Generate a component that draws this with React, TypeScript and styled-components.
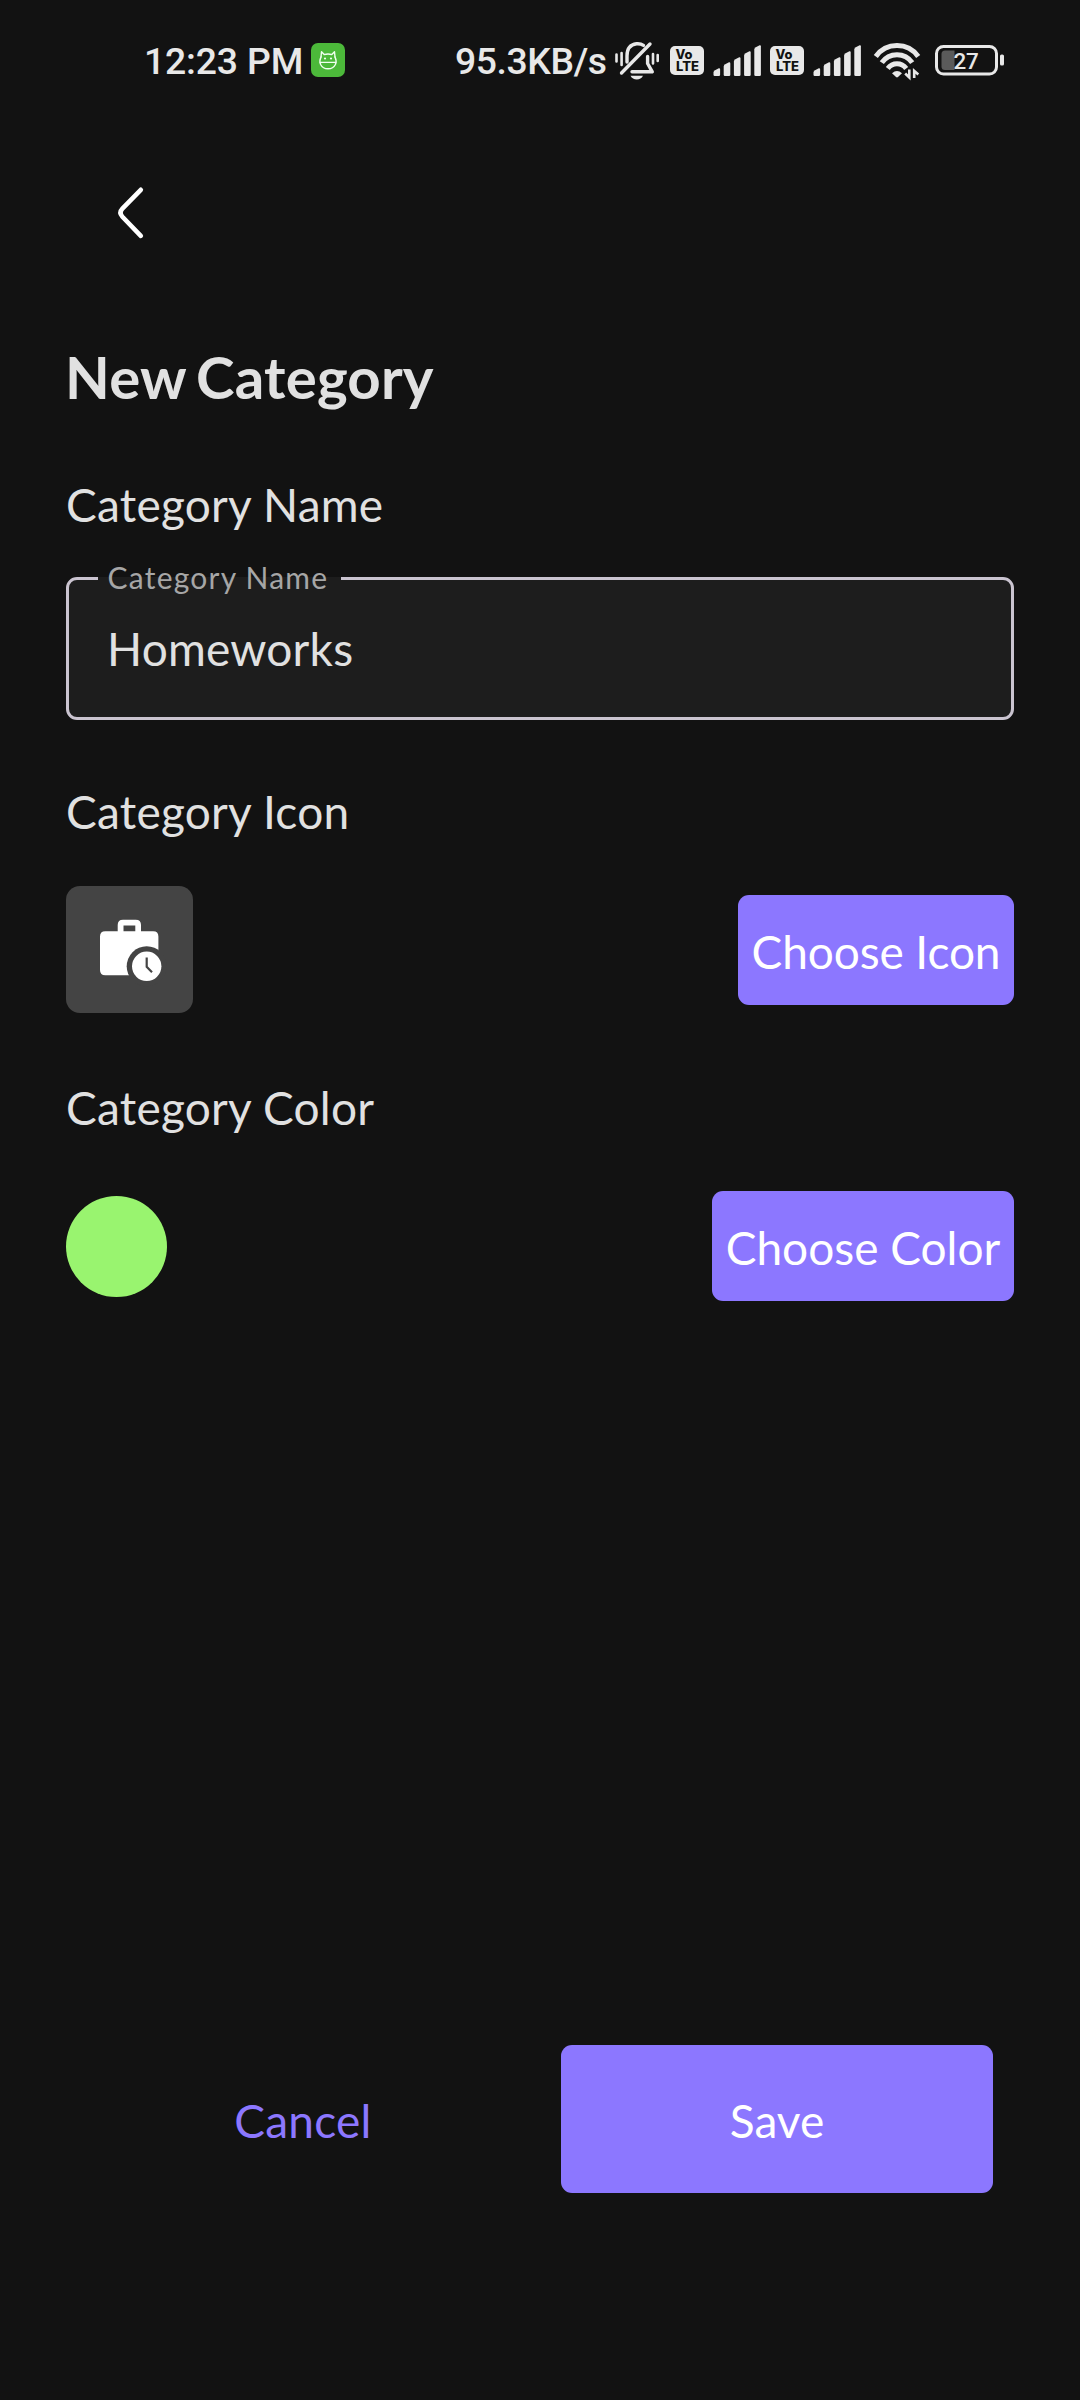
import React from "react";
import styled, { createGlobalStyle } from "styled-components";

const color = {
  bg: "#121212",
  field: "#1d1d1d",
  text: "#e1e1e1",
  muted: "#a6a6a6",
  outline: "#cac4d0",
  primary: "#8c77ff",
  tile: "#444444",
  picked: "#99f46f",
  status: "#e8e8e8",
};

const GlobalStyle = createGlobalStyle`
  * { box-sizing: border-box; }
  body { margin: 0; background: ${color.bg}; }
`;

const Screen = styled.div`
  display: flex;
  flex-direction: column;
  width: 1080px;
  height: 2400px;
  overflow: hidden;
  background: ${color.bg};
  color: ${color.text};
  font-family: Lato, "Open Sans", sans-serif;
`;

const StatusBar = styled.div`
  display: flex;
  align-items: center;
  justify-content: space-between;
  height: 120px;
  padding: 0 75px 0 144px;
  color: ${color.status};
  font: 500 37.3px/48px Roboto, sans-serif;
`;

const StatusGroup = styled.div`
  display: flex;
  align-items: center;
`;

const StatusText = styled.span<{ $width: number; $tracking?: number }>`
  width: ${(p) => p.$width}px;
  padding-top: 2px;
  white-space: nowrap;
  letter-spacing: ${(p) => p.$tracking ?? 0}px;
`;

const StatusIcon = styled.svg`
  display: block;
  flex: none;
  height: 48px;
`;

const BackBar = styled.div`
  display: flex;
  height: 222px;
  padding: 58px 0 0 96px;
`;

const BackButton = styled.button`
  width: 68px;
  height: 68px;
  padding: 0;
  border: 0;
  background: none;
`;

const Form = styled.main`
  display: flex;
  flex: 1;
  flex-direction: column;
  padding: 0 66px;
`;

const Title = styled.h1`
  margin: 0 0 65px -1px;
  font-size: 58.2px;
  font-weight: 700;
  line-height: 70px;
  letter-spacing: 0.2px;
  word-spacing: -4px;
`;

const SectionLabel = styled.h2<{ $gap: number }>`
  margin: 0 0 ${(p) => p.$gap}px;
  font-size: 46px;
  font-weight: 400;
  line-height: 56px;
  letter-spacing: 0.25px;
`;

const Field = styled.div`
  position: relative;
  height: 143px;
  margin-bottom: 64px;
  padding: 41px 37px 0 38px;
  border: 3px solid ${color.outline};
  border-radius: 11px;
  background: ${color.field};
`;

const FloatingLabel = styled.label`
  position: absolute;
  top: -21px;
  left: 29px;
  width: 243px;
  padding-left: 9.5px;
  background: linear-gradient(${color.bg} 18px, ${color.field} 18px);
  color: ${color.muted};
  font-size: 30px;
  line-height: 36px;
  letter-spacing: 1.23px;
  white-space: nowrap;
`;

const Input = styled.input`
  display: block;
  width: 100%;
  height: 56px;
  padding: 0;
  border: 0;
  outline: 0;
  background: none;
  color: inherit;
  font: 400 46px/56px Lato, "Open Sans", sans-serif;
  letter-spacing: 0.22px;
`;

const Row = styled.div<{ $height: number; $gap?: number }>`
  display: flex;
  align-items: center;
  justify-content: space-between;
  height: ${(p) => p.$height}px;
  margin-bottom: ${(p) => p.$gap ?? 0}px;
`;

const IconTile = styled.div`
  width: 127px;
  height: 127px;
  margin-bottom: 1px;
  border-radius: 14px;
  background: ${color.tile};
`;

const Swatch = styled.div`
  width: 101px;
  height: 101px;
  border-radius: 50%;
  background: ${color.picked};
`;

const Button = styled.button<{ $width: number; $height: number; $plain?: boolean; $tracking?: number }>`
  display: flex;
  align-items: center;
  justify-content: center;
  width: ${(p) => p.$width}px;
  height: ${(p) => p.$height}px;
  padding: 4px 0 0;
  border: 0;
  border-radius: 11px;
  background: ${(p) => (p.$plain ? "none" : color.primary)};
  color: ${(p) => (p.$plain ? color.primary : "#fff")};
  font: 400 46px/56px Lato, "Open Sans", sans-serif;
  letter-spacing: ${(p) => p.$tracking ?? 0}px;
  white-space: nowrap;
`;

const Actions = styled.footer`
  display: flex;
  justify-content: space-between;
  height: 355px;
  padding: 0 87px;
`;

const RobotIcon = () => (
  <StatusIcon width="34" viewBox="311 36 34 48">
    <rect x="311" y="43" width="34" height="34" rx="7" fill="#4cb93a" />
    <g fill="none" stroke="#f0fff0" strokeWidth="1.4" strokeLinecap="round" strokeLinejoin="round">
      <path d="M321 57 L321.5 51.8 L324.2 54.6 Q328 53.4 331.8 54.6 L334.5 51.8 L335 57" />
      <path d="M321 57 Q319 61 320.6 64.5 Q322.8 68.8 328 68.8 Q333.2 68.8 335.4 64.5 Q337 61 335 57" />
      <path d="M320.3 62.4 H335.7" />
    </g>
    <circle cx="325" cy="58.5" r="1.1" fill="#f0fff0" />
    <circle cx="331" cy="58.5" r="1.1" fill="#f0fff0" />
  </StatusIcon>
);

const MutedBellIcon = () => (
  <StatusIcon width="46" viewBox="614 36 46 48">
    <g fill="none" stroke={color.status} strokeWidth="3.4" strokeLinecap="round">
      <path d="M627 62 V56 Q627 45 636.5 43.8 Q640.5 43.4 643.5 45.4" />
      <path d="M621.5 73 L650 44" />
      <path d="M647.6 56.5 V63.5 L652.3 71.8 H632" strokeLinejoin="round" />
      <path d="M616.5 54.5 V61.5 M621.6 53 V65 M653 54 V63.5 M657.7 55 V61" strokeWidth="2.6" />
    </g>
    <path d="M630.5 75.8 H643 Q641 79.6 636.8 79.6 Q632.5 79.6 630.5 75.8 Z" fill={color.status} />
  </StatusIcon>
);

const VolteIcon = ({ width }: { width: number }) => (
  <StatusIcon width={width} viewBox={`670 36 ${width} 48`}>
    <rect x="670" y="46" width="34" height="29" rx="5" fill={color.status} />
    <g fill="#121212" fontFamily="Inter, sans-serif" fontWeight="800">
      <text x="675.5" y="58.8" fontSize="12.5" textLength="17" lengthAdjust="spacingAndGlyphs">Vo</text>
      <text x="676" y="71.4" fontSize="12.5" textLength="23" lengthAdjust="spacingAndGlyphs">LTE</text>
    </g>
  </StatusIcon>
);

const signalTops = [68, 62, 57, 51, 45];

const SignalIcon = ({ width }: { width: number }) => (
  <StatusIcon width={width} viewBox={`713 36 ${width} 48`}>
    {signalTops.map((top, i) => {
      const x = 713.5 + i * 10.2;
      return (
        <path
          key={top}
          d={`M${x} ${top + 4.6} Q${x} ${top + 3} ${x + 1.5} ${top + 2.2} L${x + 5.3} ${top + 0.3} Q${x + 6.6} ${top} ${x + 6.6} ${top + 1.4} V74.8 Q${x + 6.6} 76 ${x + 5.4} 76 H${x + 1.2} Q${x} 76 ${x} 74.8 Z`}
          fill={color.status}
        />
      );
    })}
  </StatusIcon>
);

const WifiIcon = () => (
  <StatusIcon width="62" viewBox="873 36 62 48">
    <g fill="none" stroke={color.status} strokeWidth="5">
      <path d="M875.8 56.5 A26 26 0 0 1 918.2 56.5" />
      <path d="M881.8 62.6 A18.5 18.5 0 0 1 912.2 62.6" />
      <path d="M887.8 68.4 A11.5 11.5 0 0 1 906.2 68.4" />
    </g>
    <path d="M892 73.2 Q897 68.6 902 73.2 L898 77 Q897 77.8 896 77 Z" fill={color.status} />
    <path d="M905.2 73.5 L909.3 77.5 V69.5 M914.2 78 V70.8 L918.3 74.4" fill="none" stroke={color.status} strokeWidth="2.6" />
  </StatusIcon>
);

const BatteryIcon = () => (
  <StatusIcon width="70" viewBox="935 36 70 48">
    <rect x="936.5" y="46.5" width="60" height="27.5" rx="7" fill="none" stroke={color.status} strokeWidth="3" />
    <path d="M954.5 50.5 V70 H945 Q941.5 70 941.5 66.5 V54 Q941.5 50.5 945 50.5 Z" fill="#5a5a5a" />
    <rect x="1000" y="54.5" width="4" height="11" rx="1.6" fill={color.status} />
    <text x="953.4" y="69" fill={color.status} fontFamily="Roboto, sans-serif" fontSize="22.4" fontWeight="500">27</text>
  </StatusIcon>
);

const BriefcaseClockIcon = () => (
  <svg width="127" height="127" viewBox="0 0 127 127">
    <path
      fillRule="evenodd"
      fill="#fff"
      d="M51.7 45.3 V39 Q51.7 33.7 57 33.7 H69.7 Q75 33.7 75 39 V45.3 H87.2 Q92.4 45.3 92.4 50.5 V84 Q92.4 89.3 87.2 89.3 H39.3 Q34 89.3 34 84 V50.5 Q34 45.3 39.3 45.3 Z M57.5 39.6 V45.3 H69.3 V39.6 Z"
    />
    <circle cx="80.7" cy="80.3" r="20" fill={color.tile} />
    <circle cx="80.7" cy="80.3" r="14.7" fill="#fff" />
    <path d="M80.7 71.6 V80.9 L86 86.2" fill="none" stroke={color.tile} strokeWidth="2.2" />
  </svg>
);

export default function App() {
  return (
    <Screen>
      <GlobalStyle />
      <StatusBar>
        <StatusGroup>
          <StatusText $width={167} $tracking={-0.15}>12:23 PM</StatusText>
          <RobotIcon />
        </StatusGroup>
        <StatusGroup>
          <StatusText $width={159} $tracking={-0.4}>95.3KB/s</StatusText>
          <MutedBellIcon />
          <StatusText $width={10} />
          <VolteIcon width={43} />
          <SignalIcon width={57} />
          <VolteIcon width={43} />
          <SignalIcon width={60} />
          <WifiIcon />
          <BatteryIcon />
        </StatusGroup>
      </StatusBar>
      <BackBar>
        <BackButton aria-label="Back">
          <svg width="68" height="68" viewBox="96 178 68 68" fill="none" stroke="#fff" strokeWidth="4.6" strokeLinecap="round">
            <path d="M140.8 189.8 L122.4 208.6 Q118.6 212.6 122.4 216.8 L140.8 235.8" />
          </svg>
        </BackButton>
      </BackBar>
      <Form>
        <Title>New Category</Title>
        <SectionLabel $gap={44}>Category Name</SectionLabel>
        <Field>
          <FloatingLabel htmlFor="name">Category Name</FloatingLabel>
          <Input id="name" defaultValue="Homeworks" />
        </Field>
        <SectionLabel $gap={46}>Category Icon</SectionLabel>
        <Row $height={128} $gap={66}>
          <IconTile>
            <BriefcaseClockIcon />
          </IconTile>
          <Button $width={276} $height={110} $tracking={-0.1}>Choose Icon</Button>
        </Row>
        <SectionLabel $gap={55}>Category Color</SectionLabel>
        <Row $height={110}>
          <Swatch />
          <Button $width={302} $height={110}>Choose Color</Button>
        </Row>
      </Form>
      <Actions>
        <Button $width={432} $height={148} $tracking={0.25} $plain>Cancel</Button>
        <Button $width={432} $height={148}>Save</Button>
      </Actions>
    </Screen>
  );
}
